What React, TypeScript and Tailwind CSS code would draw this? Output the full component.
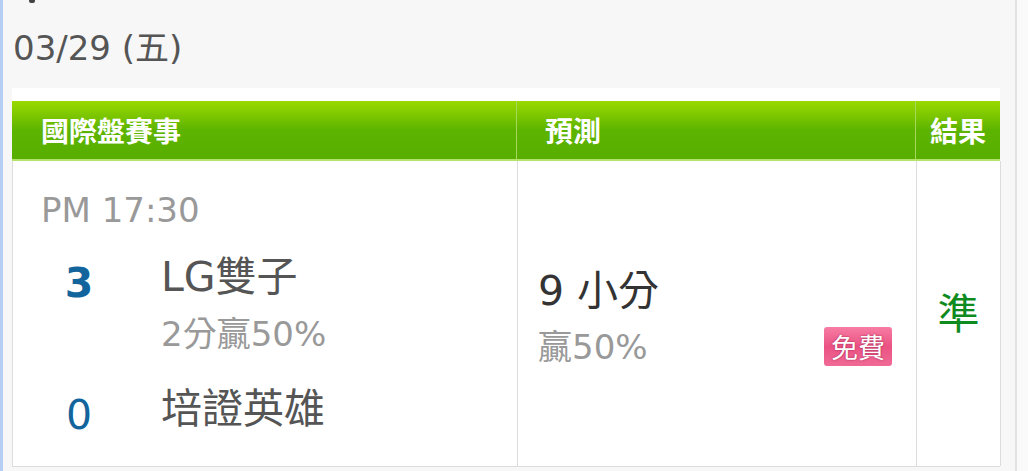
import React from "react";

const latin = { fontFamily: '"DejaVu Sans", "Noto Sans CJK TC", sans-serif' };
const cjk = { fontFamily: '"Noto Sans CJK TC", "Noto Sans", sans-serif' };

export default function App() {
  return (
    <div className="w-[1028px] h-[471px] bg-[#f7f7f7] flex overflow-hidden">
      <div className="w-[3px] shrink-0 bg-[#b7cef4]" />
      <div className="w-[1012px] shrink-0 pl-[9px] pr-[15px] flex flex-col">
        <div className="ml-[17px] w-[6px] h-[3px] bg-[#444] rounded-b-[2px]" />
        <div
          className="mt-[28px] h-[34px] leading-[34px] text-[34px] text-[#555] pl-[1px]"
          style={latin}
        >
          03/29 (五)
        </div>
        <div className="mt-[23px] bg-white pt-[13px] flex flex-col">
          <div
            className="grid grid-cols-[505px_399px_84px] h-[60px] bg-gradient-to-b from-[#9ad900] via-[#5db400] to-[#57ae00] border-b-2 border-[#b4e36a] text-white font-bold text-[28px]"
            style={cjk}
          >
            <div className="flex items-center pl-[29px] border-r border-[#a6d85a]">國際盤賽事</div>
            <div className="flex items-center pl-[28px] border-r border-[#a6d85a]">預測</div>
            <div className="flex items-center justify-center">結果</div>
          </div>
          <div className="grid grid-cols-[505px_399px_84px] h-[306px] border-l border-b border-[#dcdcdc]">
            <div className="border-r border-[#dcdcdc] pl-[28px] pt-[32px] flex flex-col">
              <div className="h-[34px] leading-[34px] text-[34px] text-[#999]" style={latin}>
                PM 17:30
              </div>
              <div className="mt-[26px] flex">
                <div
                  className="w-[76px] h-[48px] pt-[6px] text-center text-[41px] leading-[48px] font-bold text-[#12659c]"
                  style={latin}
                >
                  3
                </div>
                <div className="ml-[44px] flex flex-col">
                  <div className="h-[48px] text-[41px] leading-[48px] text-[#555]" style={latin}>
                    LG雙子
                  </div>
                  <div className="mt-[13px] h-[40px] text-[34px] leading-[40px] text-[#999]" style={latin}>
                    2分贏50%
                  </div>
                </div>
              </div>
              <div className="mt-[31px] flex">
                <div
                  className="w-[76px] h-[48px] pt-[6px] text-center text-[41px] leading-[48px] text-[#12659c]"
                  style={latin}
                >
                  0
                </div>
                <div className="ml-[44px] h-[48px] text-[41px] leading-[48px] text-[#555]" style={latin}>
                  培證英雄
                </div>
              </div>
            </div>
            <div className="border-r border-[#dcdcdc] pl-[20px] pr-[24px] flex items-center">
              <div className="flex-1 flex flex-col mt-[6px]">
                <div className="h-[48px] text-[41px] leading-[48px] text-[#333]" style={latin}>
                  9 小分
                </div>
                <div className="mt-[12px] flex items-center justify-between">
                  <div className="h-[40px] text-[34px] leading-[40px] text-[#999]" style={latin}>
                    贏50%
                  </div>
                  <div
                    className="w-[68px] h-[39px] rounded-[3px] bg-gradient-to-b from-[#f77ca4] via-[#ea5283] to-[#f06a96] flex items-center justify-center text-white text-[27px] leading-none [text-shadow:0_0_2px_#9a1d4a]"
                    style={cjk}
                  >
                    免費
                  </div>
                </div>
              </div>
            </div>
            <div className="flex items-center justify-center border-r border-[#dcdcdc]">
              <div className="text-[42px] leading-[48px] text-[#0f8a1e] mb-[6px]" style={cjk}>
                準
              </div>
            </div>
          </div>
        </div>
      </div>
      <div className="w-[2px] shrink-0 bg-[#e2e2e2]" />
      <div className="flex-1 bg-[#fafafa]" />
    </div>
  );
}
